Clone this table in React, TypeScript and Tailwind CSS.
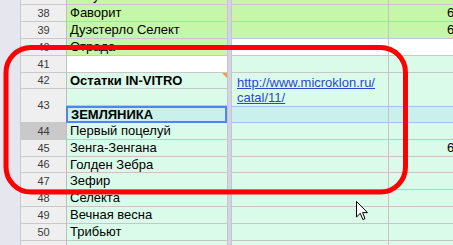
import React from "react";

const font = { fontFamily: '"Liberation Sans", Arial, sans-serif' };

const GREEN = "bg-[#c6f6a8] border-[#cbc4d8]";
const WHITE = "bg-white border-[#c8c8c8]";
const MINT = "bg-[#dafbea] border-[#c6c6c6]";

type Row = { h: string; bg: string; text?: string; bold?: boolean };

// col A (frozen)
const colA: Row[] = [
  { h: "h-[17px]", bg: GREEN, text: "Фаворит" },
  { h: "h-[17px]", bg: GREEN, text: "Дуэстерло Селект" },
  { h: "h-[17px]", bg: GREEN, text: "Отрада" },
  { h: "h-[17px]", bg: WHITE },
];

const colATail: Row[] = [
  { h: "h-[17px]", bg: MINT, text: "Первый поцелуй" },
  { h: "h-[17px]", bg: MINT, text: "Зенга-Зенгана" },
  { h: "h-[16px]", bg: MINT, text: "Голден Зебра" },
  { h: "h-[17px]", bg: MINT, text: "Зефир" },
  { h: "h-[17px]", bg: MINT, text: "Селекта" },
  { h: "h-[17px]", bg: MINT, text: "Вечная весна" },
  { h: "h-[17px]", bg: MINT, text: "Трибьют" },
];

const headers = [
  { n: "38", h: "h-[17px]" },
  { n: "39", h: "h-[17px]" },
  { n: "40", h: "h-[17px]" },
  { n: "41", h: "h-[17px]" },
  { n: "42", h: "h-[16px]" },
  { n: "43", h: "h-[34px]" },
  { n: "44", h: "h-[17px]", sel: true },
  { n: "45", h: "h-[17px]" },
  { n: "46", h: "h-[16px]" },
  { n: "47", h: "h-[17px]" },
  { n: "48", h: "h-[17px]" },
  { n: "49", h: "h-[17px]" },
  { n: "50", h: "h-[17px]" },
];

const tailHeights = ["h-[17px]", "h-[17px]", "h-[16px]", "h-[17px]", "h-[17px]", "h-[17px]", "h-[17px]"];

function Cell({ row }: { row: Row }) {
  return (
    <div className={`${row.h} ${row.bg} border-b pl-[3px] text-[13px] leading-[16px] text-black whitespace-nowrap overflow-hidden ${row.bold ? "font-bold" : ""}`}>
      {row.text}
    </div>
  );
}

// right pane column (B or C)
function RightCol({ width, sixes, url }: { width: string; sixes: number[]; url?: boolean }) {
  const six = (i: number) => (sixes.includes(i) ? "6" : "");
  return (
    <div className={`${width} shrink-0 flex flex-col border-r border-[#c4c4c4] text-[13px] leading-[16px] text-black`}>
      <div className="h-[5px] bg-[#c6f6a8] border-b border-[#cbc4d8] overflow-hidden">
        <div className="-mt-[12px] h-[16px] pl-[58px]">{six(37)}</div>
      </div>
      <div className={`h-[17px] border-b ${GREEN} ${url ? "" : "pl-[58px]"}`}>{six(38)}</div>
      <div className={`h-[17px] border-b ${GREEN} ${url ? "" : "pl-[58px]"}`}>{six(39)}</div>
      <div className={`h-[17px] border-b ${WHITE}`}></div>
      <div className={`h-[17px] border-b ${MINT}`}></div>
      <div className="h-[33px] bg-[#dafbea] flex items-end pl-[5px] pb-[1px]">
        {url && (
          <a href="#" className="text-[#2a48cf] underline leading-[15px]">
            http://www.microklon.ru/
            <br />
            catal/11/
          </a>
        )}
      </div>
      <div className="h-[17px] bg-[#caf0eb] border-y border-[#a6bff2]"></div>
      {tailHeights.map((h, i) => (
        <div key={i} className={`${h} border-b ${MINT} ${url ? "" : "pl-[58px]"}`}>
          {six(44 + i)}
        </div>
      ))}
      <div className="flex-1 bg-[#dafbea]"></div>
    </div>
  );
}

export default function App() {
  return (
    <div className="relative w-[453px] h-[245px] overflow-hidden flex bg-white" style={font}>
      {/* left margin */}
      <div className="w-[21px] shrink-0 bg-[#e5e6ee] border-r border-[#c6c7d2]"></div>

      {/* row headers */}
      <div className="w-[46px] shrink-0 flex flex-col bg-[#efefef] border-r border-[#bdbdbd] text-[11px] text-[#3a3a3a]">
        <div className="h-[5px] border-b border-[#c9c9c9]"></div>
        {headers.map((r) => (
          <div
            key={r.n}
            className={`${r.h} border-b border-[#c9c9c9] flex items-center justify-center ${r.sel ? "bg-[#c9c9c9]" : ""}`}
          >
            {r.n}
          </div>
        ))}
        <div className="flex-1"></div>
      </div>

      {/* column A */}
      <div className="w-[160px] shrink-0 flex flex-col">
        <div className="h-[5px] bg-[#c6f6a8] border-b border-[#cbc4d8] overflow-hidden">
          <div className="-mt-[12px] h-[16px] pl-[3px] text-[13px] leading-[16px]">Фокус</div>
        </div>
        {colA.map((r, i) => (
          <Cell key={i} row={r} />
        ))}
        <div className="relative h-[16px] bg-[#dafbea] border-b border-[#c6c6c6] pl-[3px] text-[13px] leading-[16px] font-bold">
          Остатки IN-VITRO
          <div className="absolute right-0 top-0 w-0 h-0 border-l-[5px] border-l-transparent border-t-[5px] border-t-[#f0a03a]"></div>
        </div>
        <div className="h-[17px] bg-[#dafbea] border-b border-[#c6c6c6]"></div>
        <div className="h-[17px] bg-[#caf0eb] border-2 border-[#4e87e8] -ml-px pl-[3px] text-[13px] leading-[13px] font-bold flex items-center">
          ЗЕМЛЯНИКА
        </div>
        {colATail.map((r, i) => (
          <Cell key={i} row={r} />
        ))}
        <div className="flex-1 bg-[#dafbea]"></div>
      </div>

      {/* frozen divider */}
      <div className="w-[5px] shrink-0 bg-[#d3d4de] border-x border-[#c4c5d0]"></div>

      <RightCol width="w-[157px]" sixes={[]} url />
      <RightCol width="w-[80px]" sixes={[37, 38, 39, 45]} />

      {/* annotation */}
      <svg className="absolute inset-0 pointer-events-none" width="453" height="245">
        <rect x="6" y="47.5" width="399.5" height="144.5" rx="25" fill="none" stroke="#ff0000" strokeWidth="5" />
      </svg>

      {/* mouse pointer */}
      <svg className="absolute left-[356px] top-[201px]" width="13" height="20" viewBox="0 0 13 20">
        <path
          d="M0.5 0.5 L0.5 16 L4.3 12.3 L6.8 18.5 L9 17.6 L6.6 11.6 L11.5 11.6 Z"
          fill="#fff"
          stroke="#000"
          strokeWidth="1"
          strokeLinejoin="round"
        />
      </svg>
    </div>
  );
}
